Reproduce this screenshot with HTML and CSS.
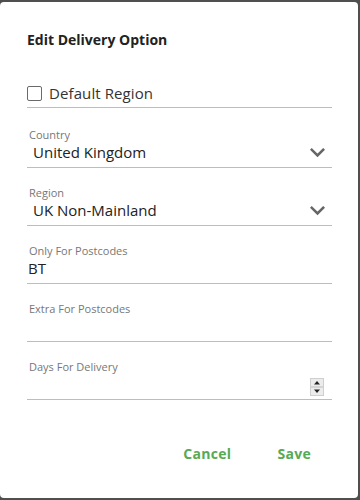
FILE: index.html
```html
<!DOCTYPE html>
<html lang="en">
<head>
<meta charset="utf-8">
<title>Edit Delivery Option</title>
<link rel="stylesheet" href="styles.css">
</head>
<body>
<div class="dialog">
  <h2 class="title">Edit Delivery Option</h2>
  <label class="check-row">
    <span class="checkbox"></span>
    <span class="check-text">Default Region</span>
  </label>
  <div class="field first">
    <div class="label">Country</div>
    <div class="value select">
      <span>United Kingdom</span>
      <svg class="chev" width="15" height="10" viewBox="0 0 15 10"><polyline points="1.8,1.8 7.5,7.5 13.2,1.8" fill="none" stroke="#666" stroke-width="2.6" stroke-linecap="square"/></svg>
    </div>
  </div>
  <div class="field">
    <div class="label">Region</div>
    <div class="value select">
      <span>UK Non-Mainland</span>
      <svg class="chev" width="15" height="10" viewBox="0 0 15 10"><polyline points="1.8,1.8 7.5,7.5 13.2,1.8" fill="none" stroke="#666" stroke-width="2.6" stroke-linecap="square"/></svg>
    </div>
  </div>
  <div class="field">
    <div class="label">Only For Postcodes</div>
    <div class="value input">BT</div>
  </div>
  <div class="field">
    <div class="label">Extra For Postcodes</div>
    <div class="value input"></div>
  </div>
  <div class="field">
    <div class="label">Days For Delivery</div>
    <div class="value input number">
      <svg class="spin" width="14" height="18" viewBox="0 0 14 18">
        <rect x="0.5" y="0.5" width="13" height="17" fill="#ececec" stroke="#cfcfcf"/>
        <line x1="1" y1="9" x2="13" y2="9" stroke="#bdbdbd"/>
        <polygon points="4,6.5 10,6.5 7,3" fill="#222"/>
        <polygon points="4,11.5 10,11.5 7,15" fill="#222"/>
      </svg>
    </div>
  </div>
  <div class="actions">
    <button class="btn">Cancel</button>
    <button class="btn">Save</button>
  </div>
</div>
</body>
</html>
```

FILE: styles.css
```css
html, body {
  margin: 0;
  padding: 0;
}
body {
  background: #4f4f4f;
  font-family: "Open Sans", "Noto Sans", sans-serif;
  width: 360px;
  height: 500px;
  overflow: hidden;
}
.dialog {
  box-sizing: border-box;
  margin: 2px 2px 2px 0;
  width: 358px;
  height: 496px;
  background: #fff;
  border-radius: 4px;
  padding: 28px 26px 0 27px;
  display: flex;
  flex-direction: column;
}
.title {
  margin: 0;
  font-size: 14px;
  line-height: 20px;
  font-weight: 700;
  color: #222;
}
.check-row {
  margin-top: 32px;
  display: flex;
  align-items: center;
  gap: 7px;
  height: 22px;
  padding-bottom: 3px;
  border-bottom: 1px solid #bdbdbd;
}
.checkbox {
  box-sizing: border-box;
  width: 15px;
  height: 15px;
  border: 1px solid #6a6a6a;
  border-radius: 2px;
  background: #fff;
}
.check-text {
  font-size: 15px;
  color: #333;
  letter-spacing: 0.1px;
}
.field {
  padding-top: 18px;
  padding-bottom: 5px;
  border-bottom: 1px solid #bdbdbd;
}
.field.first {
  margin-top: 2px;
}
.label {
  font-size: 11px;
  line-height: 14px;
  color: #777;
  padding-left: 2px;
}
.value {
  height: 20px;
  line-height: 20px;
  font-size: 15px;
  color: #222;
  display: flex;
  align-items: center;
}
.select {
  padding-left: 6px;
  padding-right: 7px;
  justify-content: space-between;
}
.input {
  padding-left: 1px;
}
.number {
  justify-content: flex-end;
  padding-right: 8px;
}
.spin {
  display: block;
  margin-top: 6px;
}
.chev {
  display: block;
  margin-top: 1px;
}
.actions {
  margin-top: 44px;
  display: flex;
  justify-content: flex-end;
  gap: 46px;
  padding-right: 21px;
}
.btn {
  border: 0;
  background: none;
  padding: 0;
  font-family: "Open Sans", "Noto Sans", sans-serif;
  font-size: 14px;
  line-height: 20px;
  font-weight: 700;
  color: #56aa56;
  letter-spacing: 0.3px;
}
```
